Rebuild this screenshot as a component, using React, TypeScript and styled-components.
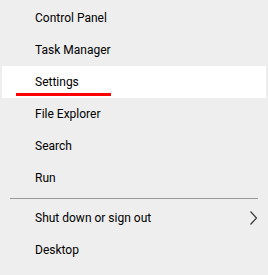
import React from 'react';
import styled, { createGlobalStyle } from 'styled-components';

const GlobalStyle = createGlobalStyle`
  html, body {
    margin: 0;
    padding: 0;
    background: #eeeeee;
  }
  body {
    font-family: 'Segoe UI', Roboto, 'Liberation Sans', sans-serif;
  }
`;

const items = [
  { label: 'Control Panel' },
  { label: 'Task Manager' },
  { label: 'Settings', active: true },
  { label: 'File Explorer' },
  { label: 'Search' },
  { label: 'Run' },
  { separator: true },
  { label: 'Shut down or sign out', submenu: true },
  { label: 'Desktop' },
];

const App = () => {
  return (
    <>
      <GlobalStyle />
      <Menu>
        {items.map((item, i) =>
          item.separator ? (
            <Separator key={i} />
          ) : (
            <Item key={i} $active={!!item.active}>
              <span>{item.label}</span>
              {item.submenu && (
                <svg width="9" height="16" viewBox="0 0 9 16">
                  <path d="M1.5 1.5 L7.5 8 L1.5 14.5" fill="none" stroke="#3b3b3b" strokeWidth="1.2" />
                </svg>
              )}
              {item.active && <Underline />}
            </Item>
          )
        )}
      </Menu>
    </>
  );
};

export default App;

const Menu = styled.div`
  width: 268px;
  height: 275px;
  box-sizing: border-box;
  padding: 2px 2px 0 2px;
  display: flex;
  flex-direction: column;
  background: #eeeeee;
`;

const Item = styled.div<{ $active: boolean }>`
  position: relative;
  height: 32px;
  display: flex;
  align-items: center;
  justify-content: space-between;
  padding: 0 8px 0 33px;
  font-size: 12px;
  color: #000;
  background: ${(p) => (p.$active ? '#ffffff' : 'transparent')};
  svg {
    display: block;
  }
`;

const Underline = styled.div`
  position: absolute;
  left: 14px;
  bottom: 2px;
  width: 95px;
  height: 3px;
  background: #ff0000;
`;

const Separator = styled.div`
  height: 1px;
  margin: 4px 8px 3px 8px;
  background: #999999;
`;
